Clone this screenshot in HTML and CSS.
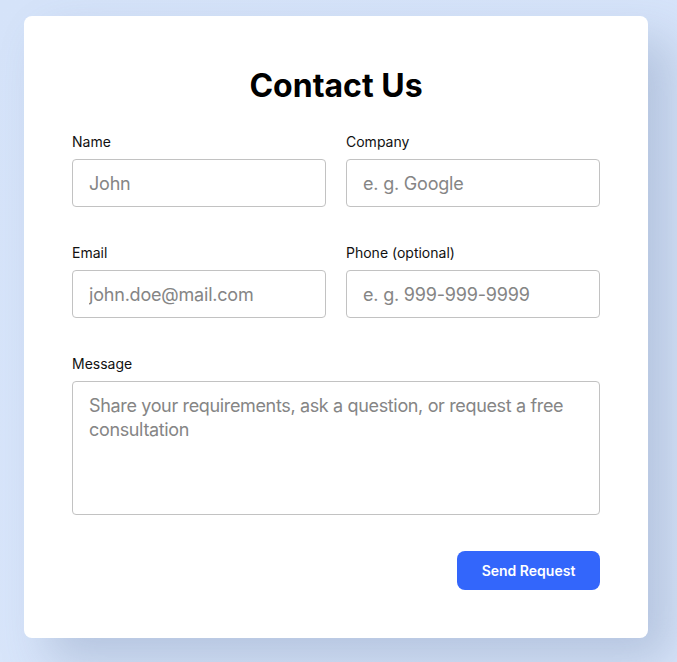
FILE: index.html
```html
<!DOCTYPE html>
<html lang="en">
<head>
<meta charset="utf-8">
<title>Contact Us</title>
<link rel="stylesheet" href="styles.css">
</head>
<body>
<main class="card">
  <h1 class="title">Contact Us</h1>
  <form class="form">
    <div class="row">
      <div class="field">
        <label class="label" for="name">Name</label>
        <input class="input" id="name" type="text" placeholder="John">
      </div>
      <div class="field">
        <label class="label" for="company">Company</label>
        <input class="input" id="company" type="text" placeholder="e. g. Google">
      </div>
    </div>
    <div class="row">
      <div class="field">
        <label class="label" for="email">Email</label>
        <input class="input" id="email" type="email" placeholder="john.doe@mail.com">
      </div>
      <div class="field">
        <label class="label" for="phone">Phone (optional)</label>
        <input class="input" id="phone" type="tel" placeholder="e. g. 999-999-9999">
      </div>
    </div>
    <div class="field">
      <label class="label" for="message">Message</label>
      <textarea class="input textarea" id="message" placeholder="Share your requirements, ask a question, or request a free consultation"></textarea>
    </div>
    <div class="actions">
      <button class="button" type="button">Send Request</button>
    </div>
  </form>
</main>
</body>
</html>
```

FILE: styles.css
```css
* { box-sizing: border-box; }
html, body { margin: 0; }
body {
  min-height: 662px;
  background: linear-gradient(160deg, #d5e3f9 0%, #d9e6fb 100%);
  padding: 16px 0 0 24px;
  font-family: Inter, "Noto Sans", sans-serif;
  color: #000;
}
.card {
  width: 624px;
  height: 622px;
  background: #fff;
  border-radius: 8px;
  padding: 48px 48px;
  box-shadow: 24px 24px 48px rgba(90, 110, 150, 0.28);
}
.title {
  margin: 0 0 24px;
  text-align: center;
  font-size: 32px;
  line-height: 44px;
  font-weight: 700;
  letter-spacing: 0;
}
.form {
  display: flex;
  flex-direction: column;
  gap: 36px;
}
.row {
  display: grid;
  grid-template-columns: minmax(0, 1fr) minmax(0, 1fr);
  gap: 20px;
}
.field {
  display: flex;
  flex-direction: column;
  gap: 7px;
  min-width: 0;
}
.label {
  font-size: 14px;
  line-height: 20px;
  font-weight: 400;
  color: #111;
}
.input {
  width: 100%;
  min-width: 0;
  height: 48px;
  border: 1px solid #c2c2c2;
  border-radius: 4px;
  padding: 0 16px;
  font-family: inherit;
  font-size: 18px;
  letter-spacing: -0.2px;
  color: #222;
  background: #fff;
  outline: none;
}
.input::placeholder { color: #858585; }
.textarea {
  height: 134px;
  padding: 12px 16px;
  line-height: 24px;
  letter-spacing: -0.35px;
  resize: none;
}
.actions {
  display: flex;
  justify-content: flex-end;
}
.button {
  width: 143px;
  height: 39px;
  border: none;
  border-radius: 8px;
  background: #3366fb;
  color: #fff;
  font-family: inherit;
  font-size: 14px;
  font-weight: 600;
}
```
